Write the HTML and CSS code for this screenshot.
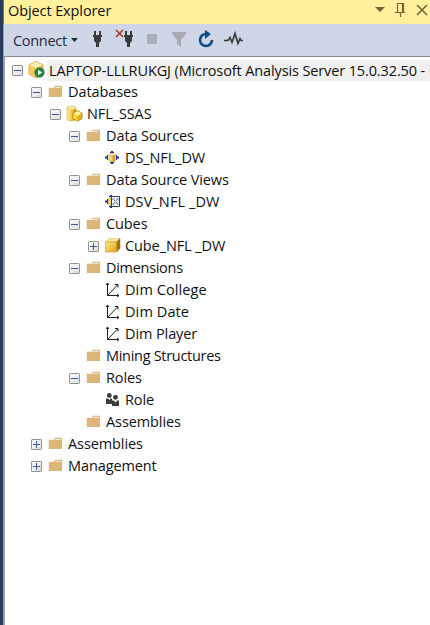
FILE: index.html
```html
<!DOCTYPE html>
<html lang="en">
<head>
<meta charset="utf-8">
<title>Object Explorer</title>
<link rel="stylesheet" href="styles.css">
</head>
<body>
<svg class="defs" aria-hidden="true">
  <defs>
    <linearGradient id="gold" x1="0" x2="1" y1="0" y2="0"><stop offset="0" stop-color="#fff0a0"/><stop offset=".45" stop-color="#f6cf50"/><stop offset="1" stop-color="#c58b10"/></linearGradient>
    <linearGradient id="face" x1="0" x2="1" y1="0" y2="1"><stop offset="0" stop-color="#fbe48a"/><stop offset="1" stop-color="#e3a81b"/></linearGradient>
    <linearGradient id="box" x1="0" x2="1" y1="0" y2="1"><stop offset="0" stop-color="#fff"/><stop offset="1" stop-color="#dcdcdc"/></linearGradient>
    <symbol id="minus" viewBox="0 0 11 11"><rect x=".5" y=".5" width="10" height="10" rx=".7" fill="url(#box)" stroke="#919191"/><path d="M2 5.5h7" stroke="#3b57a4"/></symbol>
    <symbol id="plus" viewBox="0 0 11 11"><rect x=".5" y=".5" width="10" height="10" rx=".7" fill="url(#box)" stroke="#919191"/><path d="M2 5.5h7M5.5 2v7" stroke="#3b57a4"/></symbol>
    <symbol id="folder" viewBox="0 0 16 16"><path d="M0 3h5l1-2h8v12H0z" fill="#f5ede4"/><path d="M1 4h5l1.500-2H14v11H1z" fill="#dcb679"/><path d="M7.500 3.500h5.500" stroke="#f8eddc"/></symbol>
    <symbol id="plug" viewBox="0 0 12 18"><path d="M2 1h2v4H2zM7 1h2v4H7zM1 5h9v2H9v4L7 13v4H4v-4L2 11V7H1z" fill="#3b3b3f"/></symbol>
    <symbol id="server" viewBox="0 0 18 18"><path d="M1 4 8 .5 15 4v9l-7 4-7-4z" fill="#e9bf43" stroke="#b8902c" stroke-width=".7"/><path d="M1.300 4 8 1l6.700 3L8 7.300z" fill="#fff1b6"/><path d="M1.300 4.300 8 7.500v9l-6.700-3.800z" fill="#f4cc57"/><circle cx="11.500" cy="11.500" r="4.800" fill="#238443" stroke="#145c2b" stroke-width=".5"/><path d="m10 8.700 4.300 2.800-4.300 2.800z" fill="#fff"/></symbol>
    <symbol id="database" viewBox="0 0 18 18"><path d="M1 3v11c0 2.500 9 2.500 9 0V3z" fill="url(#gold)" stroke="#c79a36" stroke-width=".5"/><ellipse cx="5.500" cy="3" rx="4.500" ry="1.900" fill="#ffe99b" stroke="#d3a740" stroke-width=".5"/><path d="m11.500 5.500 4.700 2.700v5.300l-4.700 2.700-4.700-2.700V8.200z" fill="#dfb51b" stroke="#8e7015" stroke-width=".6"/><path d="m11.500 6 4.200 2.400-4.200 2.400-4.200-2.400z" fill="#fff391"/><path d="m7.200 8.600 4.100 2.400v4.600l-4.100-2.300z" fill="#f5d53b"/></symbol>
    <symbol id="source" viewBox="0 0 16 16"><path d="M6 1h2v2H6zM6 12h2v2H6zM0 6.500h3v2H0zM11 6.500h3v2h-3zM2 5h1v5H2zM11 5h1v5h-1zM5 2h4v1H5zM5 12h4v1H5z" fill="#1929a3"/><path d="M4 4.500v6c0 1.700 6 1.700 6 0v-6z" fill="url(#gold)" stroke="#a47a22" stroke-width=".5"/><ellipse cx="7" cy="4.500" rx="3" ry="1.200" fill="#fff0ad" stroke="#b98f34" stroke-width=".5"/></symbol>
    <symbol id="view" viewBox="0 0 16 16"><path d="M5 1h2v2H5zM5 12h2v2H5zM0 6.500h3v2H0zM2 5h1v5H2zM4 2h4v1H4zM4 12h4v1H4z" fill="#1929a3"/><path d="M3.500 4.500v6c0 1 4 1 4 0v-6z" fill="url(#gold)" stroke="#a47a22" stroke-width=".5"/><path d="M6.500 2.500h8v10h-8z" fill="#f7f9ff" stroke="#303c55"/><path d="m8 5 5 5m0-5-5 5" stroke="#6281b4"/><path d="M7.500 4h2v2h-2zM11.500 4h2v2h-2zM7.500 9h2v2h-2zM11.500 9h2v2h-2z" fill="#8b9ebf"/></symbol>
    <symbol id="cube" viewBox="0 0 16 16"><path d="M.5 4 4 .7h11L11.500 4z" fill="#ffe9a0" stroke="#c99b28" stroke-width=".5"/><path d="M11.500 4 15 .7v9.500L11.500 14z" fill="#a97408" stroke="#8b6007" stroke-width=".5"/><path d="M.5 4h11v10H.5z" fill="url(#face)" stroke="#bd8c1d" stroke-width=".5"/></symbol>
    <symbol id="axis" viewBox="0 0 16 16"><path d="M2.500 1v12.500H14M2.500 13.500 12.500 3M1 3l1.500-2L4 3M12 12l2 1.500-2 1.500M10 2.500h3v3" fill="none" stroke="#202020"/></symbol>
    <symbol id="people" viewBox="0 0 16 16"><circle cx="4.300" cy="3.500" r="2.400" fill="#3c3c3c"/><circle cx="10.500" cy="5.300" r="2.400" fill="#3c3c3c"/><path d="M1 6.500h2L4.300 8l1.200-1.500h1.500V12H1zM7 8.500h2l1.500 2 1.500-2h2V14H7z" fill="#3c3c3c"/></symbol>
  </defs>
</svg>
<main class="panel">
  <header class="title"><h1>Object Explorer</h1>
    <svg class="window-tools" viewBox="0 0 56 20"><path d="M0 5h10L5 10z" fill="#756536"/><path d="M22.500 10V1.500h6V10M20 10.500h10M25.500 11v4M27.500 2v8" fill="none" stroke="#756536" stroke-width="1.200"/><path d="m42 3 10 10m0-10L42 13" stroke="#756536" stroke-width="1.600"/></svg>
  </header>
  <div class="toolbar">
    <span class="connect">Connect</span>
    <svg class="tools" viewBox="0 0 176 32"><path d="M0 14h7l-3.500 4z" fill="#1e2c3d"/><use href="#plug" x="21" y="6" width="12" height="18"/><use href="#plug" x="52" y="6" width="12" height="18"/><path d="m45 6 7 7m0-7-7 7" stroke="#a93422" stroke-width="1.500"/><path d="M76 10h10v10H76z" fill="#acafb7"/><path d="M101 8h14v2l-5 6v7l-4-3v-4l-5-6z" fill="#a9acb5"/><path d="M135 10a6 6 0 1 0 6 6" fill="none" stroke="#114a85" stroke-width="2.600"/><path d="m134 6 6 4-6 5z" fill="#114a85"/><path d="M153 16.500h4l2-3 2 5 3-9 3 10 2-5 1 2h2" fill="none" stroke="#39393b" stroke-width="1.600"/></svg>
  </div>
  <ul class="tree">
    <li><div class="row"><svg class="toggle"><use href="#minus"/></svg><svg class="icon large"><use href="#server"/></svg><span class="label server">LAPTOP-LLLRUKGJ (Microsoft Analysis Server 15.0.32.50 - L</span></div>
      <ul>
        <li><div class="row"><svg class="toggle"><use href="#minus"/></svg><svg class="icon"><use href="#folder"/></svg><span class="label">Databases</span></div>
          <ul><li><div class="row"><svg class="toggle"><use href="#minus"/></svg><svg class="icon large"><use href="#database"/></svg><span class="label">NFL_SSAS</span></div>
            <ul>
              <li><div class="row"><svg class="toggle"><use href="#minus"/></svg><svg class="icon"><use href="#folder"/></svg><span class="label">Data Sources</span></div>
                <ul><li><div class="row"><span class="toggle"></span><svg class="icon"><use href="#source"/></svg><span class="label">DS_NFL_DW</span></div></li></ul></li>
              <li><div class="row"><svg class="toggle"><use href="#minus"/></svg><svg class="icon"><use href="#folder"/></svg><span class="label">Data Source Views</span></div>
                <ul><li><div class="row"><span class="toggle"></span><svg class="icon"><use href="#view"/></svg><span class="label wide">DSV_NFL _DW</span></div></li></ul></li>
              <li><div class="row"><svg class="toggle"><use href="#minus"/></svg><svg class="icon"><use href="#folder"/></svg><span class="label">Cubes</span></div>
                <ul><li><div class="row"><svg class="toggle"><use href="#plus"/></svg><svg class="icon"><use href="#cube"/></svg><span class="label">Cube_NFL _DW</span></div></li></ul></li>
              <li><div class="row"><svg class="toggle"><use href="#minus"/></svg><svg class="icon"><use href="#folder"/></svg><span class="label tight">Dimensions</span></div>
                <ul>
                  <li><div class="row"><span class="toggle"></span><svg class="icon"><use href="#axis"/></svg><span class="label wide">Dim College</span></div></li>
                  <li><div class="row"><span class="toggle"></span><svg class="icon"><use href="#axis"/></svg><span class="label wide">Dim Date</span></div></li>
                  <li><div class="row"><span class="toggle"></span><svg class="icon"><use href="#axis"/></svg><span class="label">Dim Player</span></div></li>
                </ul></li>
              <li><div class="row"><span class="toggle"></span><svg class="icon"><use href="#folder"/></svg><span class="label tight">Mining Structures</span></div></li>
              <li><div class="row"><svg class="toggle"><use href="#minus"/></svg><svg class="icon"><use href="#folder"/></svg><span class="label">Roles</span></div>
                <ul><li><div class="row"><span class="toggle"></span><svg class="icon"><use href="#people"/></svg><span class="label">Role</span></div></li></ul></li>
              <li><div class="row"><span class="toggle"></span><svg class="icon"><use href="#folder"/></svg><span class="label">Assemblies</span></div></li>
            </ul></li></ul></li>
        <li><div class="row"><svg class="toggle"><use href="#plus"/></svg><svg class="icon"><use href="#folder"/></svg><span class="label">Assemblies</span></div></li>
        <li><div class="row"><svg class="toggle"><use href="#plus"/></svg><svg class="icon"><use href="#folder"/></svg><span class="label">Management</span></div></li>
      </ul></li>
  </ul>
</main>
</body>
</html>
```
FILE: styles.css
```css
* { box-sizing: border-box; }
body { margin: 0; overflow: hidden; background: #fff; color: #111; font: 14.5px/22px "Open Sans", "Noto Sans", sans-serif; }
.defs { display: block; width: 0; height: 0; }
.panel { height: 625px; border-left: 3px solid #2b3b60; }
.title { display: flex; height: 24px; justify-content: space-between; border-left: 1px solid #71718a; background: #fff09c; }
h1 { margin: 0; padding-left: 4px; font-size: 14.5px; font-weight: 400; line-height: 22px; letter-spacing: -.1px; }
.window-tools { width: 56px; height: 20px; margin: 2px -1px 0 0; }
.toolbar { display: flex; height: 32px; padding-left: 9px; border-left: 1px solid #9a9db2; background: #cfd6e5; color: #1e2c3d; }
.connect { width: 58px; font-size: 14.5px; line-height: 33px; letter-spacing: -.3px; }
.tools { width: 176px; height: 32px; }
.tree { height: 569px; padding: 2px 0 0 7px; border-top: 1px solid #85869a; border-left: 2px solid #9a9db2; }
ul { margin: 0; padding: 0; list-style: none; }
li > ul { padding-left: 19px; }
.row { display: flex; height: 22px; align-items: center; white-space: nowrap; }
.toggle { flex: none; width: 11px; height: 11px; margin-top: 1px; }
.icon { flex: none; width: 16px; height: 16px; margin-left: 6px; }
.icon.large { width: 18px; height: 18px; margin: 0 -2px 0 5px; }
.label { height: 22px; padding-left: 4px; letter-spacing: -.1px; line-height: 21px; }
.icon.large + .label { padding-left: 5px; }
.label.wide { letter-spacing: .1px; }
.label.tight { letter-spacing: -.3px; }
.icon.large + .label.server { flex: 1; min-width: 0; height: 21px; margin-left: 3px; padding-left: 2px; overflow: hidden; background: #f0f0f0; letter-spacing: -.12px; }
```
